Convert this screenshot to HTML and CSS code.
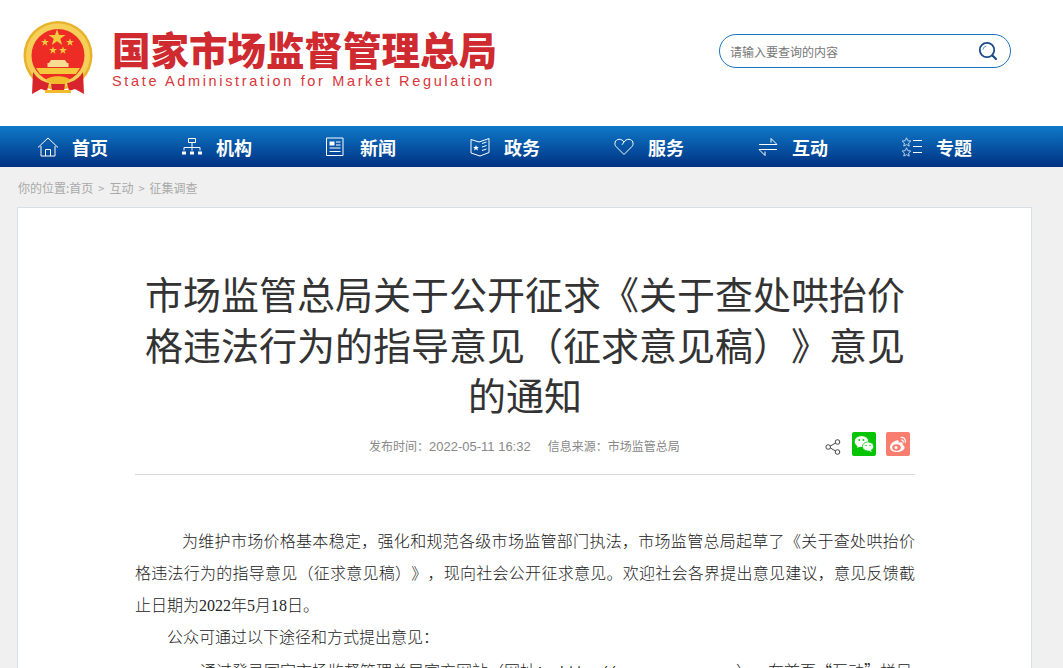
FILE: index.html
```html
<!DOCTYPE html>
<html lang="zh-CN">
<head>
<meta charset="utf-8">
<title>市场监管总局</title>
<link rel="stylesheet" href="styles.css">
</head>
<body>
<header class="top">
  <div class="brand">
    <svg class="emblem" viewBox="0 0 72 76" width="72" height="76">
      <circle cx="36" cy="34.500" r="34.500" fill="#e8b32c"/>
      <circle cx="36" cy="34.500" r="32" fill="#f5cf57"/>
      <circle cx="36" cy="34.500" r="26.500" fill="#ee2c26"/>
      <polygon fill="#f3c93d" points="35,8 37,14 43.500,14 38.300,17.800 40.200,24 35,20.200 29.800,24 31.700,17.800 26.500,14 33,14"/>
      <polygon fill="#f3c93d" points="23,17.500 24,20 27,20 24.600,21.800 25.500,24.800 23,23 20.500,24.800 21.400,21.800 19,20 22,20"/>
      <polygon fill="#f3c93d" points="48,17.500 49,20 52,20 49.600,21.800 50.500,24.800 48,23 45.500,24.800 46.400,21.800 44,20 47,20"/>
      <polygon fill="#f3c93d" points="31,25.500 32,28 35,28 32.600,29.800 33.500,32.800 31,31 28.500,32.800 29.400,29.800 27,28 30,28"/>
      <polygon fill="#f3c93d" points="41,25.500 42,28 45,28 42.600,29.800 43.500,32.800 41,31 38.500,32.800 39.400,29.800 37,28 40,28"/>
      <path fill="#f8dc92" d="M29 39h14l2 3h1.500v4h-21v-4H27z"/>
      <path fill="#f5c93c" d="M14 47h44l-4 6H18z"/>
      <path fill="#d8242b" d="M11 51c3 5 9 10 16 11l-2 8-6-2-9 5zM61 51c-3 5-9 10-16 11l2 8 6-2 9 5z"/>
      <path fill="#f2bd2d" d="M24 59c3-5 21-5 24 0l-5 4H29z"/>
      <path fill="#d8242b" d="M29 63h14l-1 6H30z"/>
      <path fill="#f2bd2d" d="M23 69h26v3H23z"/>
    </svg>
    <div class="names">
      <div class="name-cn">国家市场监督管理总局</div>
      <div class="name-en">State Administration for Market Regulation</div>
    </div>
  </div>
  <form class="search">
    <span class="search-text">请输入要查询的内容</span>
    <svg class="search-icon" viewBox="0 0 20 20" width="20" height="20">
      <circle cx="9" cy="9" r="7.200" fill="none" stroke="#1b4a8c" stroke-width="1.800"/>
      <path d="M5 8.500a4 4 0 0 1 3.500-3.500" fill="none" stroke="#6f8fbc" stroke-width="1"/>
      <path d="M14.500 14.500l3.500 3.500" stroke="#1b4a8c" stroke-width="2.200" stroke-linecap="round"/>
    </svg>
  </form>
</header>

<nav class="nav">
  <a class="nav-item">
    <svg class="nav-icon" viewBox="0 0 22 20" width="22" height="20"><path d="M1 10.500L11 1l10 9.500M4 9v10h14V9M8.500 19v-6.500h5V19" fill="none" stroke="#fff"/></svg>
    <span>首页</span>
  </a>
  <a class="nav-item">
    <svg class="nav-icon" viewBox="0 0 22 20" width="22" height="20"><path d="M7.500 1.500h7v4h-7zM11 5.500v5M3 10.500h16M3 10.500v3M11 10.500v3M19 10.500v3" fill="none" stroke="#fff"/><path d="M1 14.500h4v3H1zM9 14.500h4v3H9zM17 14.500h4v3h-4z" fill="#fff"/></svg>
    <span>机构</span>
  </a>
  <a class="nav-item">
    <svg class="nav-icon" viewBox="0 0 22 20" width="22" height="20"><path d="M1.500 1h16.500v17.500H1.500z" fill="none" stroke="#fff"/><path d="M4.500 4.500h5v4h-5z" fill="#fff"/><path d="M11 5h4.500M11 8h4.500M4.500 11h11M4.500 14.500h11" stroke="#fff" fill="none"/></svg>
    <span>新闻</span>
  </a>
  <a class="nav-item">
    <svg class="nav-icon" viewBox="0 0 22 20" width="22" height="20"><path d="M2 2.500l8 2.500 10-3.500v14L11 19l-9-3z" fill="none" stroke="#fff"/><polygon fill="#fff" points="7,8 7.800,10 10,10 8.300,11.300 9,13.500 7,12.200 5,13.500 5.700,11.300 4,10 6.200,10"/><path d="M13 6.500l4.500-1.500M13 10l4.500-1.500M13 13.500l4.500-1.500" stroke="#fff" fill="none"/></svg>
    <span>政务</span>
  </a>
  <a class="nav-item">
    <svg class="nav-icon" viewBox="0 0 22 20" width="22" height="20"><path d="M11 17.500L3 9.500C.8 7 2 2.500 6 2.300 8.200 2.300 10 3.300 11 5 12 3.300 13.800 2.300 16 2.300 20 2.500 21.200 7 19 9.500zM11 5L9 7.800" fill="none" stroke="#fff"/></svg>
    <span>服务</span>
  </a>
  <a class="nav-item">
    <svg class="nav-icon" viewBox="0 0 22 20" width="22" height="20"><path d="M2 7.500h18l-6-6v4M20 12.500H2l6 6v-4" fill="none" stroke="#fff"/></svg>
    <span>互动</span>
  </a>
  <a class="nav-item">
    <svg class="nav-icon" viewBox="0 0 22 20" width="22" height="20"><path d="M5.500.8l1.300 2.900 3 .3-2.200 2.100.6 3-2.700-1.500-2.700 1.500.6-3L1.200 4l3-.3zM5.500 10.800l1.300 2.900 3 .3-2.200 2.100.6 3-2.700-1.500-2.700 1.500.6-3L1.200 14l3-.3z" fill="none" stroke="#cfe0f2" stroke-width=".9"/><path d="M12 3.500h9M12 9.500h9M12 15.500h9" stroke="#fff" fill="none"/></svg>
    <span>专题</span>
  </a>
</nav>

<main class="page">
  <div class="crumbs">你的位置:首页<i>&gt;</i>互动<i>&gt;</i>征集调查</div>
  <article class="card">
    <h1 class="title">市场监管总局关于公开征求《关于查处哄抬价格违法行为的指导意见（征求意见稿）》意见的通知</h1>
    <div class="meta">
      <div class="meta-text"><span>发布时间：<b class="date">2022-05-11 16:32</b></span><span>信息来源：市场监管总局</span></div>
      <div class="share">
        <svg class="share-icon" viewBox="0 0 16 16" width="16" height="16"><path d="M11.500 3.500L4.500 7.500M4.500 8.500l7 4" stroke="#444" fill="none"/><circle cx="12.500" cy="3" r="2.300" fill="#fff" stroke="#444"/><circle cx="3.200" cy="8" r="2.300" fill="#fff" stroke="#444"/><circle cx="12.500" cy="13" r="2.300" fill="#fff" stroke="#444"/></svg>
        <svg class="share-btn" viewBox="0 0 24 24" width="24" height="24"><rect width="24" height="24" rx="2" fill="#08c406"/><ellipse cx="9.500" cy="9.500" rx="6.800" ry="5.600" fill="#fff"/><path d="M6 13l-1 3 3-1.500z" fill="#fff"/><ellipse cx="16" cy="14.500" rx="5.600" ry="4.600" fill="#fff" stroke="#08c406" stroke-width=".8"/><path d="M18.500 18l1.500 2-3.500-1.200z" fill="#fff"/><circle cx="7.200" cy="8" r=".9" fill="#08c406"/><circle cx="11.500" cy="8" r=".9" fill="#08c406"/><circle cx="14" cy="13.500" r=".7" fill="#08c406"/><circle cx="18" cy="13.500" r=".7" fill="#08c406"/></svg>
        <svg class="share-btn" viewBox="0 0 24 24" width="24" height="24"><rect width="24" height="24" rx="2" fill="#f97e70"/><path d="M10.500 8.500C6.500 9.500 3.500 13 4 16c.5 3 4.500 4.500 8.500 4 3.500-.5 6.500-2.500 6-5-.3-1.500-2-2-2-2s.8-1.800-.5-2.500c-1.500-.7-3.500.3-3.500.3s.8-2-.5-2.500c-.4-.1-.9-.1-1.500.2z" fill="#fff"/><ellipse cx="10.500" cy="15.500" rx="4.300" ry="3.300" fill="#f97e70"/><circle cx="10" cy="15.500" r="1.500" fill="#fff"/><path d="M15 5.500c3-.5 5 2 4.200 5M15.500 8c1.500-.2 2 1 1.700 2.200" fill="none" stroke="#fff" stroke-width="1.200" stroke-linecap="round"/></svg>
      </div>
    </div>
    <div class="body">
      <p>为维护市场价格基本稳定，强化和规范各级市场监管部门执法，市场监管总局起草了《关于查处哄抬价格违法行为的指导意见（征求意见稿）》，现向社会公开征求意见。欢迎社会各界提出意见建议，意见反馈截止日期为2022年5月18日。</p>
      <p class="ind-small">公众可通过以下途径和方式提出意见：</p>
      <p class="ind-large">通过登录国家市场监督管理总局官方网站（网址：<span class="url">&nbsp;http://www.samr.gov.cn</span>），在首页<span class="cjk">“互动”</span>栏目</p>
    </div>
  </article>
</main>
</body>
</html>
```
FILE: styles.css
```css
* { box-sizing: border-box; }
html, body { margin: 0; height: 668px; overflow: hidden; }
body {
  background: #f0f0f0;
  font-family: "Liberation Sans", "Noto Sans CJK SC", sans-serif;
  text-spacing-trim: space-all;
}

.top {
  height: 126px;
  background: #fff;
  display: flex;
  justify-content: space-between;
  align-items: flex-start;
  padding: 21px 52px 0 22px;
}
.brand { display: flex; gap: 18px; }
.emblem { display: block; }
.names { padding-top: 8px; }
.name-cn {
  font-family: "Noto Sans CJK SC", sans-serif;
  font-size: 38.500px;
  line-height: 38px;
  font-weight: 900;
  color: #cf2a30;
  width: 390px;
  white-space: nowrap;
}
.name-en {
  font-size: 14.500px;
  line-height: 20px;
  letter-spacing: 2.650px;
  color: #d8363a;
  margin-top: 4px;
  white-space: nowrap;
}
.search {
  width: 292px;
  height: 34px;
  margin-top: 13px;
  border: 1px solid #1b74c0;
  border-radius: 17px;
  background: #fff;
  display: flex;
  align-items: center;
  justify-content: space-between;
  padding: 0 12px 0 10px;
}
.search-text { font-size: 12px; color: #777; font-family: "Noto Sans CJK SC", sans-serif; }
.search-icon { display: block; }

.nav {
  height: 41px;
  background: linear-gradient(#0f79c9, #003182);
  display: flex;
  padding-left: 37px;
}
.nav-item {
  width: 144px;
  display: flex;
  align-items: center;
  gap: 13px;
  color: #fff;
  font-family: "Noto Sans CJK SC", sans-serif;
  font-size: 18px;
  font-weight: 700;
}
.nav-icon { display: block; flex: none; }

.page { padding: 0 31px 0 17px; }
.crumbs {
  height: 40px;
  display: flex;
  align-items: center;
  padding: 1px 0 0 1px;
  font-family: "Noto Sans CJK SC", sans-serif;
  font-size: 12px;
  color: #a9a9a9;
}
.crumbs i { font-style: normal; margin: 0 5px; font-size: 11px; }
.card {
  background: #fff;
  border: 1px solid #d8dfe8;
  padding: 60px 116px 0 117px;
  height: 480px;
  overflow: hidden;
}
.title {
  margin: 0;
  padding: 0 8px;
  font-family: "Noto Sans CJK SC", sans-serif;
  font-size: 38px;
  line-height: 50.500px;
  font-weight: 400;
  color: #333;
  text-align: center;
}
.meta {
  height: 54px;
  margin-top: 1px;
  border-bottom: 1px solid #d9d9d9;
  display: flex;
  justify-content: space-between;
  padding: 11px 5px 0 234px;
}
.meta-text {
  display: flex;
  gap: 17px;
  font-family: "Noto Sans CJK SC", sans-serif;
  font-size: 12px;
  line-height: 18px;
  padding-top: 5px;
  color: #888;
}
.date { font-family: "Liberation Sans", sans-serif; font-size: 13px; font-weight: 400; }
.share { display: flex; gap: 10px; align-items: flex-start; }
.share-icon { margin: 7px 1px 0 0; }
.body {
  padding-top: 51px;
  font-family: "Liberation Serif", "Noto Sans CJK SC", serif;
  font-size: 16px;
  line-height: 32px;
  font-weight: 300;
  color: #222;
}
.body p { margin: 0; text-indent: 47px; text-align: justify; }
.body .ind-small { text-indent: 32px; }
.body .ind-large { text-indent: 65px; }
.url { font-family: "Liberation Mono", monospace; font-size: 13.330px; vertical-align: 2px; }
.cjk { font-family: "Noto Sans CJK SC", sans-serif; }
```
